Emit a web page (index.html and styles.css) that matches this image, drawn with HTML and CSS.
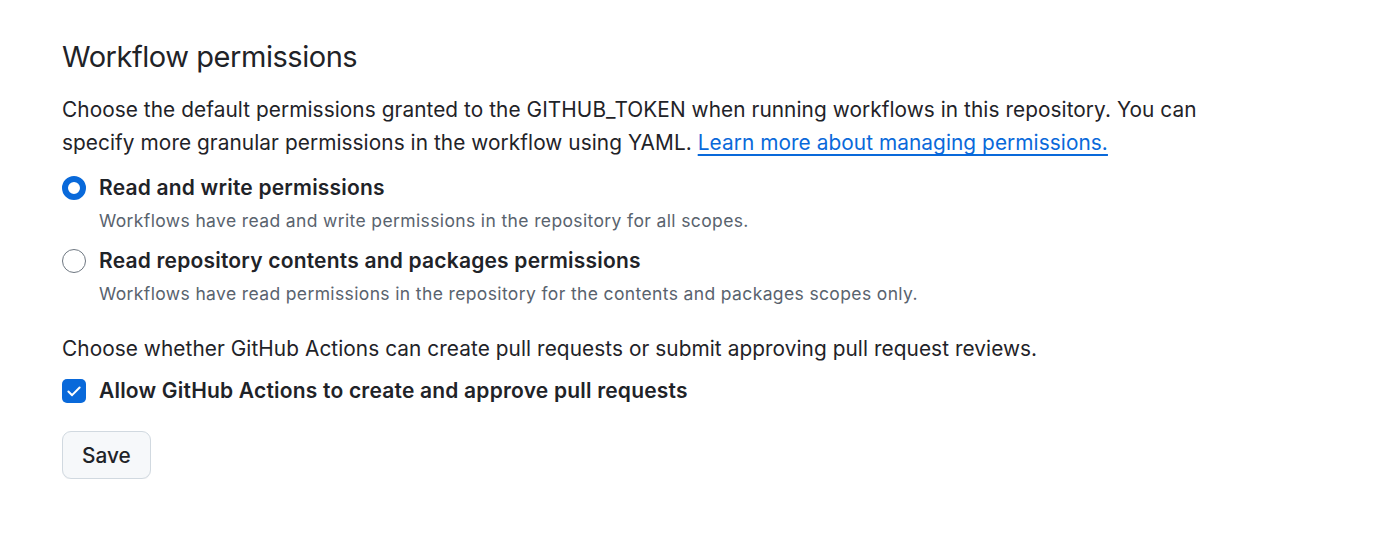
FILE: index.html
```html
<!DOCTYPE html>
<html>
<head>
<meta charset="utf-8">
<link rel="stylesheet" href="styles.css">
</head>
<body>
<div class="page">
  <h2 class="title">Workflow permissions</h2>
  <p class="intro">Choose the default permissions granted to the GITHUB_TOKEN when running workflows in this repository. You can specify more granular permissions in the workflow using YAML. <a href="#" class="link">Learn more about managing permissions.</a></p>
  <div class="option">
    <span class="radio checked"></span>
    <div class="opt-text">
      <div class="label">Read and write permissions</div>
      <div class="note">Workflows have read and write permissions in the repository for all scopes.</div>
    </div>
  </div>
  <div class="option">
    <span class="radio"></span>
    <div class="opt-text">
      <div class="label">Read repository contents and packages permissions</div>
      <div class="note">Workflows have read permissions in the repository for the contents and packages scopes only.</div>
    </div>
  </div>
  <p class="para">Choose whether GitHub Actions can create pull requests or submit approving pull request reviews.</p>
  <div class="check-row">
    <span class="checkbox"><svg width="18" height="18" viewBox="0 0 16 16"><path d="M3 8.4l3.3 3.3L13 4.9" fill="none" stroke="#fff" stroke-width="1.8" stroke-linecap="round" stroke-linejoin="round"/></svg></span>
    <span class="label">Allow GitHub Actions to create and approve pull requests</span>
  </div>
  <button class="btn">Save</button>
</div>
</body>
</html>
```
FILE: styles.css
```css
body {
  margin: 0;
  background: #fff;
  font-family: Inter, "Liberation Sans", Arial, sans-serif;
  color: #1f2328;
}
.page {
  padding: 37px 62px 0 62px;
  width: 1160px;
}
.title {
  margin: 0;
  font-size: 29px;
  font-weight: 400;
  line-height: 40px;
  letter-spacing: -0.45px;
}
.intro {
  margin: 16px 0 0 0;
  font-size: 20.8px;
  letter-spacing: 0.07px;
  line-height: 33px;
}
.link {
  color: #0969da;
  text-decoration: underline;
  text-decoration-thickness: 1.5px;
  text-underline-offset: 4px;
}
.option {
  display: flex;
  align-items: flex-start;
  gap: 13px;
  margin-top: 13px;
}
.option + .option { margin-top: 9px; }
.radio {
  width: 24px;
  height: 24px;
  box-sizing: border-box;
  border-radius: 50%;
  border: 1.5px solid #6e7781;
  margin-top: 4px;
  flex: none;
}
.radio.checked {
  border: 6.5px solid #0969da;
}
.label {
  font-size: 21px;
  font-weight: 600;
  letter-spacing: 0.2px;
  line-height: 32px;
}
.note {
  font-size: 17.5px;
  letter-spacing: 0.37px;
  color: #59636e;
  line-height: 30px;
  margin-top: 2px;
}
.para {
  margin: 23px 0 0 0;
  font-size: 20.8px;
  letter-spacing: 0.07px;
  line-height: 33px;
}
.check-row {
  display: flex;
  align-items: center;
  gap: 13px;
  margin-top: 10px;
}
.checkbox {
  width: 24px;
  height: 24px;
  border-radius: 5px;
  background: #0969da;
  display: flex;
  align-items: center;
  justify-content: center;
  flex: none;
}
.btn {
  display: block;
  margin-top: 24px;
  height: 48px;
  padding: 0 19px;
  font-family: inherit;
  font-size: 20.8px;
  font-weight: 500;
  color: #1f2328;
  background: #f6f8fa;
  border: 1.5px solid #d1d9e0;
  border-radius: 9px;
  box-shadow: 0 1px 0 rgba(31,35,40,0.04);
}
```
